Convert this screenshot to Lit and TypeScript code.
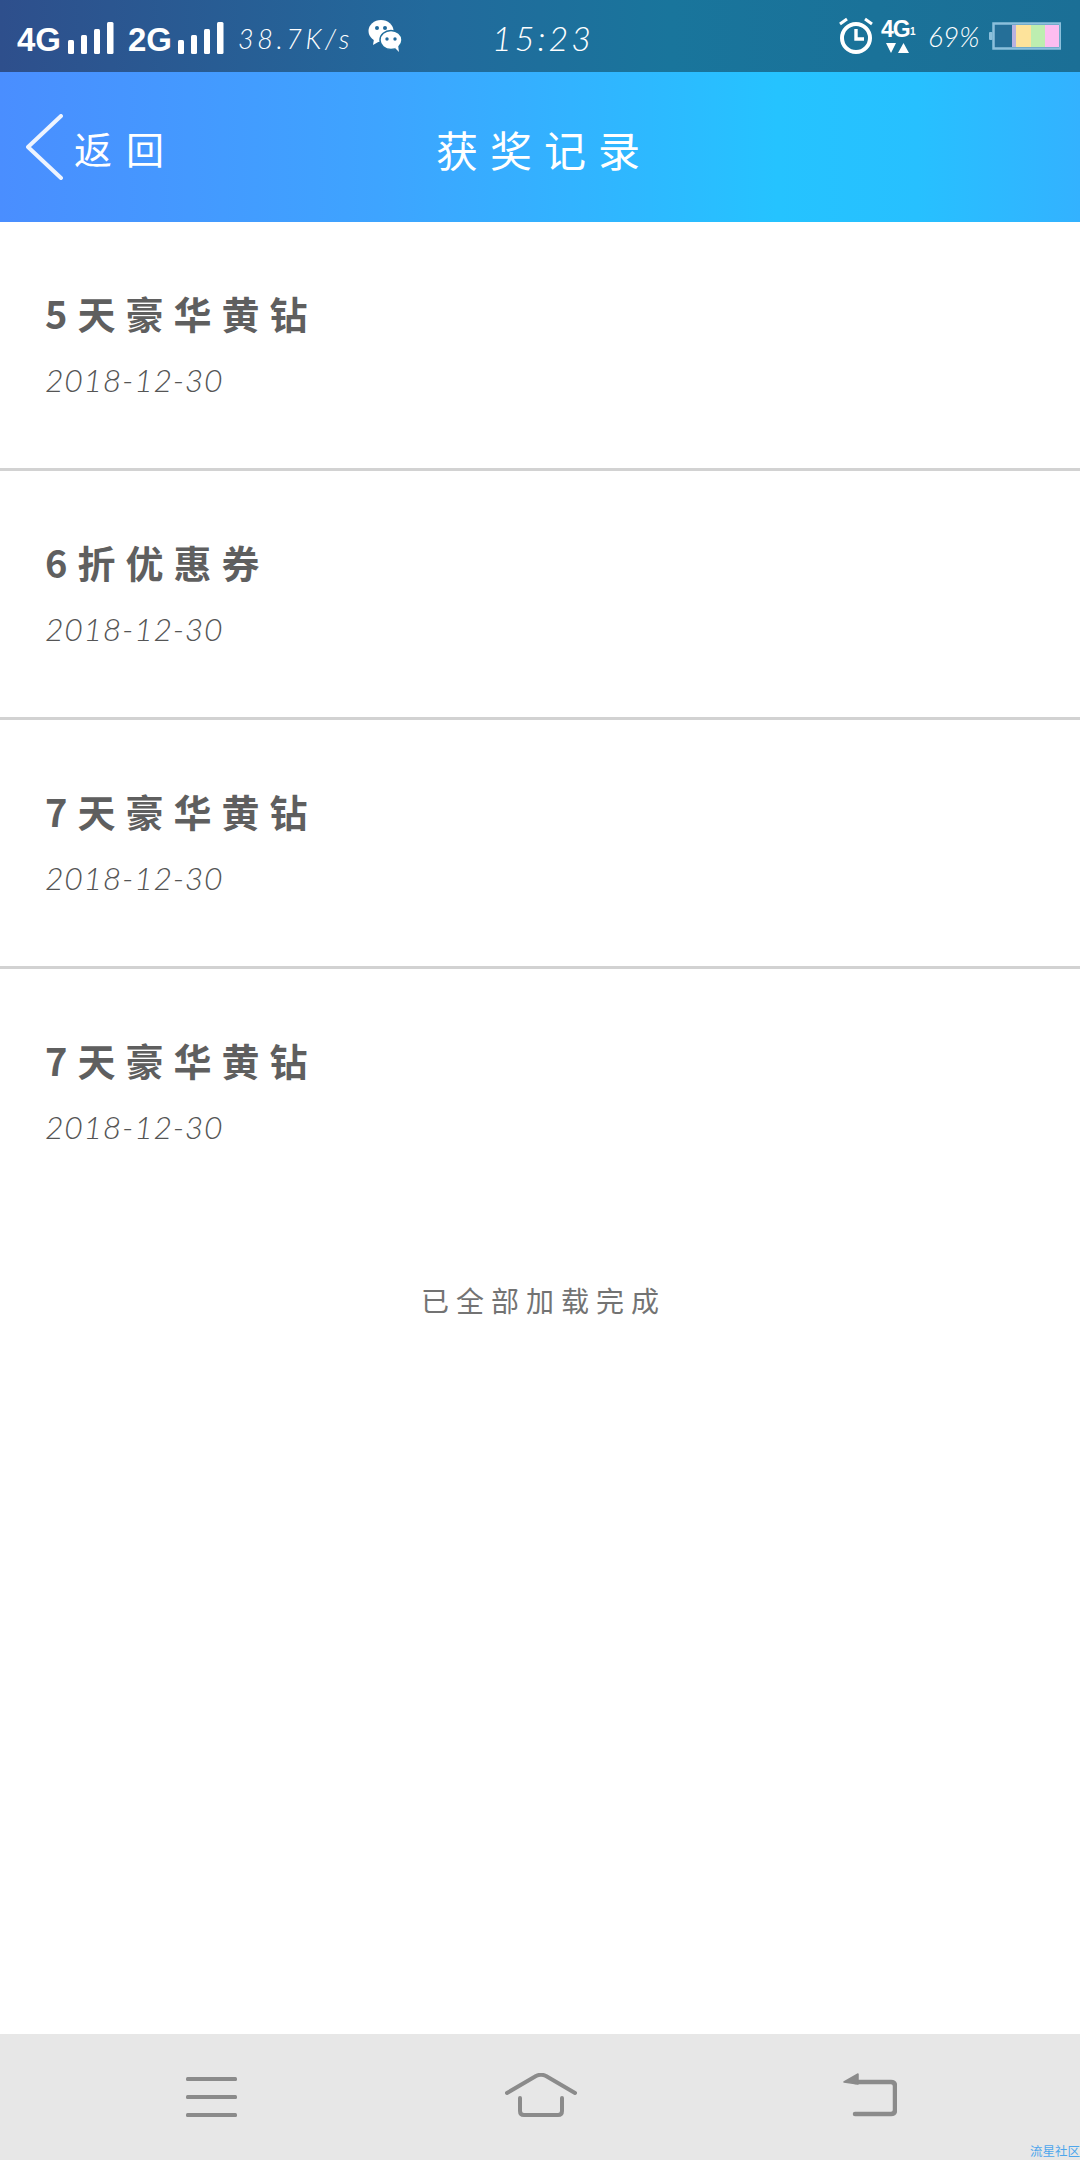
import { LitElement, html, css } from "lit";
import { customElement } from "lit/decorators.js";

const bars = () => html`<svg class="bars" width="46" height="32" viewBox="0 0 46 32" fill="#fff">
  <rect x="0" y="18" width="6" height="14" rx="1.5"/>
  <rect x="13" y="13" width="6" height="19" rx="1.5"/>
  <rect x="26" y="7" width="6" height="25" rx="1.5"/>
  <rect x="39" y="0" width="6.5" height="32" rx="1.5"/>
</svg>`;

const records = [
  { title: "5天豪华黄钻", date: "2018-12-30" },
  { title: "6折优惠券", date: "2018-12-30" },
  { title: "7天豪华黄钻", date: "2018-12-30" },
  { title: "7天豪华黄钻", date: "2018-12-30" },
];

@customElement("app-root")
export class AppRoot extends LitElement {
  static styles = css`
    :host { display: block; width: 1080px; height: 2160px; background: #fff; position: relative; overflow: hidden; font-family: "Noto Sans CJK SC", "Noto Sans", sans-serif; }
    .page { display: flex; flex-direction: column; height: 2160px; }
    .status { height: 72px; flex: none; display: flex; align-items: center; padding: 0 19px 0 17px; box-sizing: border-box; color: #fff;
      background: linear-gradient(90deg, #2e4f8c 0%, #226a9c 40%, #19759c 62%, #1b6f96 100%); }
    .net { font: 700 33px "Liberation Sans", sans-serif; width: 51px; line-height: 32px; margin-top: 8px; }
    .net.two { margin-left: 7px; width: 50px; }
    .bars { flex: none; margin-right: 7px; margin-top: 4px; }
    .speed { font: italic 300 27px Lato, "Liberation Sans", sans-serif; letter-spacing: 3.6px; width: 130px; margin-left: 7px; margin-top: 4px; white-space: nowrap; }
    .wechat { flex: none; }
    .time { font: italic 300 34px Lato, "Liberation Sans", sans-serif; letter-spacing: 3px; margin-left: 90px; white-space: nowrap; margin-top: 2px; }
    .right { margin-left: auto; display: flex; align-items: center; }
    .alarm { margin-right: 7px; flex: none; }
    .g4 { position: relative; width: 36px; height: 36px; flex: none; }
    .g4 span { position: absolute; left: 0; top: -1px; font: 700 23px/24px "Liberation Sans", sans-serif; letter-spacing: -1px; }
    .g4 small { position: absolute; left: 29px; top: 8px; font: 700 10px/12px "Liberation Sans", sans-serif; }
    .g4 svg { position: absolute; left: 5px; top: 24px; }
    .pct { font: italic 300 28px Lato, "Liberation Sans", sans-serif; margin-left: 11px; width: 58px; white-space: nowrap; }
    .batt { flex: none; margin-left: 3px; }
    .nav { height: 150px; flex: none; display: grid; grid-template-columns: 1fr auto 1fr; align-items: center; color: #fff;
      background: linear-gradient(90deg, #4a8eff 0%, #3ea4ff 35%, #25c3ff 72%, #27c0ff 85%, #33b2ff 100%); }
    .back { display: flex; align-items: center; padding-left: 26px; }
    .back svg { flex: none; }
    .back span { font-size: 38px; line-height: 50px; letter-spacing: 14px; margin-left: 10px; margin-top: 2px; }
    .title { font-size: 42px; line-height: 56px; letter-spacing: 12px; margin-right: -12px; margin-top: 4px; margin-left: -4px; }
    .list { display: flex; flex-direction: column; }
    .row { height: 246px; padding-left: 45px; border-bottom: 3px solid #d2d2d2; display: flex; flex-direction: column; }
    .row:last-child { border-bottom: none; }
    .name { margin-top: 66px; font-size: 38px; line-height: 50px; font-weight: 700; color: #5f5f5f; letter-spacing: 10px; white-space: nowrap; }
    .date { margin-top: 22px; font: italic 300 32px/40px Lato, "Liberation Sans", sans-serif; color: #555; letter-spacing: 0.7px; white-space: nowrap; }
    .done { margin-top: 65px; text-align: center; font-size: 28px; line-height: 40px; color: #737373; letter-spacing: 7px; margin-right: -7px; }
    .spacer { flex: 1; }
    .foot { height: 126px; flex: none; background: #e7e7e7; display: flex; align-items: flex-start; }
    .foot .a { margin: 43px 0 0 186px; flex: none; }
    .foot .b { margin: 39px 0 0 268px; flex: none; }
    .foot .c { margin: 39px 0 0 266px; flex: none; }
    .mark { position: absolute; right: 0; bottom: 0; white-space: nowrap; font-size: 12.5px; line-height: 18px; color: #4ea6ec; }
  `;

  render() {
    return html`<div class="page">
      <div class="status">
        <span class="net">4G</span>${bars()}
        <span class="net two">2G</span>${bars()}
        <span class="speed">38.7K/s</span>
        <svg class="wechat" width="34" height="34" viewBox="0 0 34 34" fill="#fff">
          <ellipse cx="13" cy="12" rx="12.5" ry="11"/>
          <path d="M6 20l-1 6 7-4z"/>
          <ellipse cx="23" cy="21" rx="11" ry="9.6" stroke="#1f6d9c" stroke-width="1.5"/>
          <path d="M27 29l4 4-1-7z"/>
          <circle cx="9" cy="9" r="2" fill="#206a9c"/><circle cx="17" cy="9" r="2" fill="#206a9c"/>
          <circle cx="19" cy="20" r="1.7" fill="#206a9c"/><circle cx="27" cy="20" r="1.7" fill="#206a9c"/>
        </svg>
        <span class="time">15:23</span>
        <div class="right">
          <svg class="alarm" width="36" height="38" viewBox="0 0 36 38" fill="none" stroke="#fff" stroke-width="4">
            <circle cx="18" cy="21" r="14"/>
            <path d="M18 12v10h8" stroke-width="3.4"/>
            <path d="M2 7l7-5M34 7l-7-5" stroke-width="3"/>
          </svg>
          <div class="g4"><span>4G</span><small>1</small>
            <svg width="24" height="12" viewBox="0 0 24 12" fill="#fff"><path d="M0 1h10l-5 10zM12 11h11L17.5 1z"/></svg>
          </div>
          <span class="pct">69%</span>
          <svg class="batt" width="72" height="28" viewBox="0 0 72 28">
            <rect x="0" y="10" width="3.5" height="8" rx="1" fill="#8cc0dc"/>
            <rect x="4.5" y="1.5" width="67" height="25" fill="#256f98" stroke="#8cc0dc" stroke-width="2.5"/>
            <rect x="23" y="3" width="4" height="22" fill="#b9b2e0"/>
            <rect x="27" y="3" width="15" height="22" fill="#fde39b"/>
            <rect x="42" y="3" width="14" height="22" fill="#bdeeb0"/>
            <rect x="56" y="3" width="14" height="22" fill="#fdbdf0"/>
          </svg>
        </div>
      </div>
      <div class="nav">
        <div class="back">
          <svg width="38" height="66" viewBox="0 0 38 66" fill="none" stroke="#eef4ff" stroke-width="4" stroke-linecap="round" stroke-linejoin="round"><path d="M35 2L2 33l33 31"/></svg>
          <span>返回</span>
        </div>
        <div class="title">获奖记录</div>
        <div></div>
      </div>
      <div class="list">
        ${records.map((r) => html`<div class="row"><div class="name">${r.title}</div><div class="date">${r.date}</div></div>`)}
      </div>
      <div class="done">已全部加载完成</div>
      <div class="spacer"></div>
      <div class="foot">
        <svg class="a" width="51" height="40" viewBox="0 0 51 40" fill="#8b8b8b"><rect y="0" width="51" height="4" rx="1.5"/><rect y="18" width="51" height="4" rx="1.5"/><rect y="36" width="51" height="4" rx="1.5"/></svg>
        <svg class="b" width="72" height="44" viewBox="0 0 72 44" fill="none" stroke="#8b8b8b" stroke-width="4" stroke-linecap="round" stroke-linejoin="round"><path d="M2 20L31 3q5-2.5 10 0l29 17"/><path d="M15 25v13q0 4 4 4h34q4 0 4-4V25"/></svg>
        <svg class="c" width="54" height="44" viewBox="0 0 54 44" fill="none" stroke="#8b8b8b" stroke-width="4.5"><path d="M12 9h36q4 0 4 4v24q0 4-4 4H12" stroke-linecap="round"/><path d="M1 9L15 1v10z" fill="#8b8b8b" stroke="#8b8b8b" stroke-width="1.5" stroke-linejoin="round"/></svg>
      </div>
    </div>
    <div class="mark">流星社区</div>`;
  }
}
